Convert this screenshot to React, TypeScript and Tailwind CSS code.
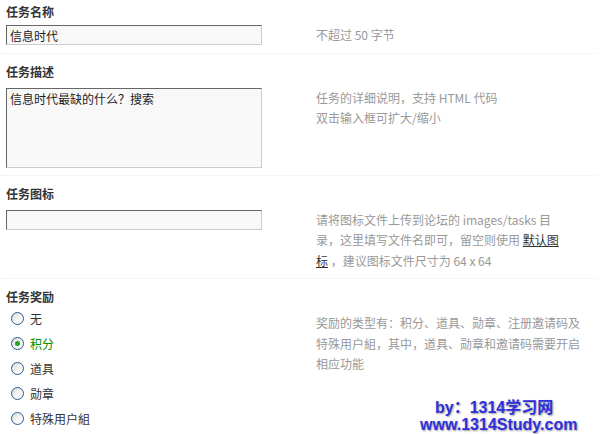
import type { ReactNode } from 'react';

const font = "font-['Noto_Sans_CJK_SC','Liberation_Sans',sans-serif]";

function Title({ children, first = false, tight = false }: { children: ReactNode; first?: boolean; tight?: boolean }) {
  return (
    <div
      className={`pl-[6px] leading-[16px] font-bold text-[#333] ${
        first ? 'pt-[4px] pb-[5px]' : 'border-t border-dotted border-[#deeffb] pt-[10px]'
      } ${!first && tight ? 'pb-[1px]' : ''} ${!first && !tight ? 'pb-[8px]' : ''}`}
    >
      {children}
    </div>
  );
}

function Row({ left, tips, tipsClass = '' }: { left: ReactNode; tips: ReactNode; tipsClass?: string }) {
  return (
    <div className="flex pb-[7px]">
      <div className="w-[316px] pl-[6px]">{left}</div>
      <div className={`w-[268px] leading-[20.5px] text-[#999] ${tipsClass}`}>{tips}</div>
    </div>
  );
}

function Radio({ label, checked = false }: { label: string; checked?: boolean }) {
  return (
    <div className="flex h-[25px] items-center pl-[11px]">
      <span className="flex h-[13px] w-[13px] items-center justify-center rounded-full border-[1.5px] border-[#2c5c8a] bg-gradient-to-br from-[#d8d8d2] via-[#f4f4f2] to-white">
        {checked && <span className="h-[5px] w-[5px] rounded-full bg-[#23a623]" />}
      </span>
      <span className={`ml-[6px] ${checked ? 'text-[#009000]' : 'text-[#333]'}`}>{label}</span>
    </div>
  );
}

const inputCls =
  'block w-[256px] border border-solid border-t-[#666] border-l-[#666] border-r-[#ccc] border-b-[#ccc] bg-[#f8f8f8] px-[3px] text-[12px] text-[#222] outline-none';

export default function App() {
  return (
    <div className={`relative h-[434px] w-[600px] overflow-hidden bg-white text-[12px] ${font}`}>
      <div className="w-[596px]">
        <Title first>任务名称</Title>
        <Row
          left={<input defaultValue="信息时代" className={`${inputCls} h-[20px] leading-[18px]`} />}
          tips="不超过 50 字节"
        />

        <Title>任务描述</Title>
        <Row
          left={
            <textarea
              defaultValue="信息时代最缺的什么？搜索"
              className={`${inputCls} h-[80px] resize-none pt-[1px] leading-[18px]`}
            />
          }
          tips={
            <>
              任务的详细说明，支持 HTML 代码
              <br />
              双击输入框可扩大/缩小
            </>
          }
        />

        <Title>任务图标</Title>
        <Row
          left={<input className={`${inputCls} h-[20px]`} />}
          tips={
            <>
              请将图标文件上传到论坛的 images/tasks 目
              <br />
              录，这里填写文件名即可，留空则使用{' '}
              <a className="text-[#333] underline">
                默认图
                <br />标
              </a>{' '}
              ，建议图标文件尺寸为 64 x 64
            </>
          }
        />

        <Title tight>任务奖励</Title>
        <div className="flex">
          <div className="w-[316px]">
            <Radio label="无" />
            <Radio label="积分" checked />
            <Radio label="道具" />
            <Radio label="勋章" />
            <Radio label="特殊用户組" />
          </div>
          <div className="w-[268px] pt-[7px] leading-[20.5px] text-[#999]">
            奖励的类型有：积分、道具、勋章、注册邀请码及特殊用户組，其中，道具、勋章和邀请码需要开启相应功能
          </div>
        </div>
      </div>

      <div className="absolute left-[420px] top-[399px] text-[16px] font-bold leading-[17px] text-[#2f2fdc] font-['Liberation_Sans','Noto_Sans_CJK_SC',sans-serif] [text-shadow:1px_1px_2px_#9a9a9a]">
        <div className="ml-[15px]">by：1314学习网</div>
        <div>www.1314Study.com</div>
      </div>
    </div>
  );
}
